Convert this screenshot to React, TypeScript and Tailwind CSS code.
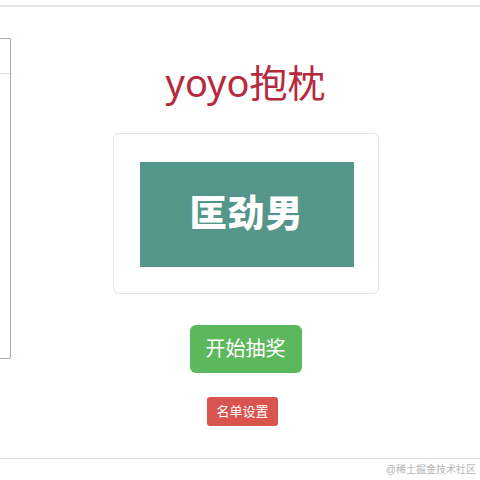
import React from "react";

const FONT = {
  fontFamily:
    '"Helvetica Neue", "Liberation Sans", "Noto Sans CJK SC", sans-serif',
};

export default function App() {
  return (
    <div
      className="w-[480px] h-[480px] overflow-hidden bg-white flex flex-col"
      style={FONT}
    >
      <div className="h-[5px] shrink-0" />
      <div className="h-[454px] shrink-0 border-t-2 border-b border-t-[#e6e6e6] border-b-[#dcdcdc] flex">
        {/* list panel, mostly off-screen */}
        <div className="shrink-0 w-[200px] -ml-[189px] mt-[31px] h-[321px] border border-[#b9a2a8] rounded-[2px]">
          <div className="h-[35px] border-b border-[#e2dcdd]" />
        </div>

        <div className="flex-1 flex flex-col items-center">
          <h1
            className="mt-[52px] text-[38px] leading-[46px] text-[#b52a3c]"
            style={{ fontFamily: '"Noto Sans", "Noto Sans CJK SC", sans-serif' }}
          >
            yoyo抱枕
          </h1>

          <div className="mt-[28px] w-[266px] h-[161px] border border-[#e6e6e6] rounded-[6px] px-[26px] pt-[28px]">
            <div className="w-[214px] h-[105px] bg-[#55968a] flex items-center justify-center">
              <span className="text-white text-[37px] font-black leading-none tracking-[1px]">
                匡劲男
              </span>
            </div>
          </div>

          <button className="mt-[31px] w-[112px] h-[48px] rounded-[6px] bg-[#5cb85c] text-white text-[20px] leading-none">
            开始抽奖
          </button>

          <button className="mt-[24px] -ml-[6px] w-[71px] h-[29px] rounded-[3px] bg-[#d9534f] text-white text-[13px] leading-none">
            名单设置
          </button>
        </div>
      </div>
      <div className="flex justify-end pr-[4px] pt-[4px]">
        <span className="text-[10px] leading-[14px] text-[#b5b5b5]">
          @稀土掘金技术社区
        </span>
      </div>
    </div>
  );
}
